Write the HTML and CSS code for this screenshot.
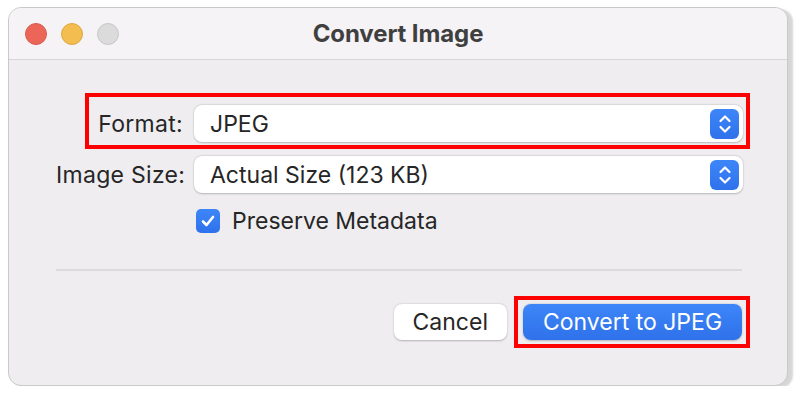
FILE: index.html
```html
<!DOCTYPE html>
<html lang="en">
<head>
    <meta charset="UTF-8">
    <meta name="viewport" content="width=device-width, initial-scale=1.0">
    <title>Convert Image</title>
    <link rel="stylesheet" href="styles.css">
</head>
<body>
    <div class="window">
        <div class="titlebar">
            <div class="lights">
                <span class="light red"></span>
                <span class="light yellow"></span>
                <span class="light gray"></span>
            </div>
            <div class="title">Convert Image</div>
            <div></div>
        </div>
        <div class="panel">
            <div class="form">
                <div class="field">
                    <label>Format:</label>
                    <div class="popup">
                        <span>JPEG</span>
                        <span class="stepper">
                            <svg width="16" height="22" viewBox="0 0 16 22"><path d="M3.5 8 L8 3.5 L12.5 8 M3.5 14 L8 18.5 L12.5 14" fill="none" stroke="#fff" stroke-width="2.2" stroke-linecap="round" stroke-linejoin="round"/></svg>
                        </span>
                    </div>
                    <div class="mark mark-format"></div>
                </div>
                <div class="field">
                    <label>Image Size:</label>
                    <div class="popup">
                        <span>Actual Size (123 KB)</span>
                        <span class="stepper">
                            <svg width="16" height="22" viewBox="0 0 16 22"><path d="M3.5 8 L8 3.5 L12.5 8 M3.5 14 L8 18.5 L12.5 14" fill="none" stroke="#fff" stroke-width="2.2" stroke-linecap="round" stroke-linejoin="round"/></svg>
                        </span>
                    </div>
                </div>
                <div class="field">
                    <span></span>
                    <div class="check-row">
                        <span class="checkbox">
                            <svg width="18" height="18" viewBox="0 0 18 18"><path d="M4 9.5 L7.5 13 L14 5" fill="none" stroke="#fff" stroke-width="2.6" stroke-linecap="round" stroke-linejoin="round"/></svg>
                        </span>
                        <span>Preserve Metadata</span>
                    </div>
                </div>
            </div>
            <div class="divider"></div>
            <div class="actions">
                <button class="btn">Cancel</button>
                <div class="btn-wrap">
                    <button class="btn primary">Convert to JPEG</button>
                    <div class="mark mark-convert"></div>
                </div>
            </div>
        </div>
    </div>
</body>
</html>
```

FILE: styles.css
```css
html, body { margin: 0; padding: 0; background: #fff; }
*, *::before, *::after { box-sizing: border-box; }
body { font-family: 'Inter', 'Liberation Sans', sans-serif; color: #262626; }

.window { margin: 7px 0 0 8px; width: 780px; height: 379px; background: #efedf0; border: 1px solid #c9c8ca; border-radius: 13px; box-shadow: 5px 2px 2px rgba(0, 0, 0, 0.16); overflow: hidden; }

.titlebar { height: 52px; background: #f5f3f5; border-bottom: 1px solid #d6d4d7; display: grid; grid-template-columns: 1fr auto 1fr; align-items: center; }
.lights { display: flex; gap: 14px; padding-left: 16px; }
.light { width: 22px; height: 22px; border-radius: 50%; display: inline-block; }
.light.red { background: #ec6559; border: 1px solid #d9584d; }
.light.yellow { background: #f3bd4f; border: 1px solid #dda83f; }
.light.gray { background: #dcdbdc; border: 1px solid #c8c7c8; }
.title { font-size: 24px; font-weight: 700; color: #3f3f3f; letter-spacing: -0.1px; }

.panel { padding: 45px 45px 0 47px; }
.form { display: flex; flex-direction: column; gap: 14px; }
.field { display: grid; grid-template-columns: 127px 549px; column-gap: 11px; align-items: center; position: relative; }
.field label { text-align: right; font-size: 23px; white-space: nowrap; letter-spacing: 0.3px; }

.popup { height: 37px; background: #fff; border-radius: 8px; box-shadow: 0 0.5px 2px rgba(0, 0, 0, 0.22), 0 0 0 0.5px rgba(0, 0, 0, 0.06); display: flex; align-items: center; justify-content: space-between; padding: 0 4px 0 16px; font-size: 23px; }
.stepper { width: 29px; height: 30px; border-radius: 6px; background: linear-gradient(#3d86f8, #2f72ec); display: flex; align-items: center; justify-content: center; }

.check-row { display: flex; align-items: center; gap: 12px; font-size: 23px; }
.checkbox { width: 24px; height: 24px; border-radius: 5px; background: linear-gradient(#3d86f8, #2f72ec); display: flex; align-items: center; justify-content: center; margin-left: 2px; }

.divider { height: 2px; background: #dcdadd; margin: 34px 0 0 0; width: 686px; }

.actions { display: flex; justify-content: flex-end; gap: 16px; margin-top: 33px; width: 686px; }
.btn-wrap { position: relative; }
.btn { height: 36px; border: none; border-radius: 8px; background: #fff; box-shadow: 0 0.5px 2px rgba(0, 0, 0, 0.25); font-family: 'Inter', 'Liberation Sans', sans-serif; font-size: 23px; color: #262626; padding: 0 19px; }
.btn.primary { background: linear-gradient(#3d86f8, #2f71ea); color: #fff; width: 219px; padding: 0; }

/* red annotation frames */
.mark { position: absolute; border: 4px solid #f00; pointer-events: none; }
.mark-format { left: 29px; right: -8px; top: -12px; bottom: -7px; }
.mark-convert { left: -9px; right: -8px; top: -8px; bottom: -8px; }
```
